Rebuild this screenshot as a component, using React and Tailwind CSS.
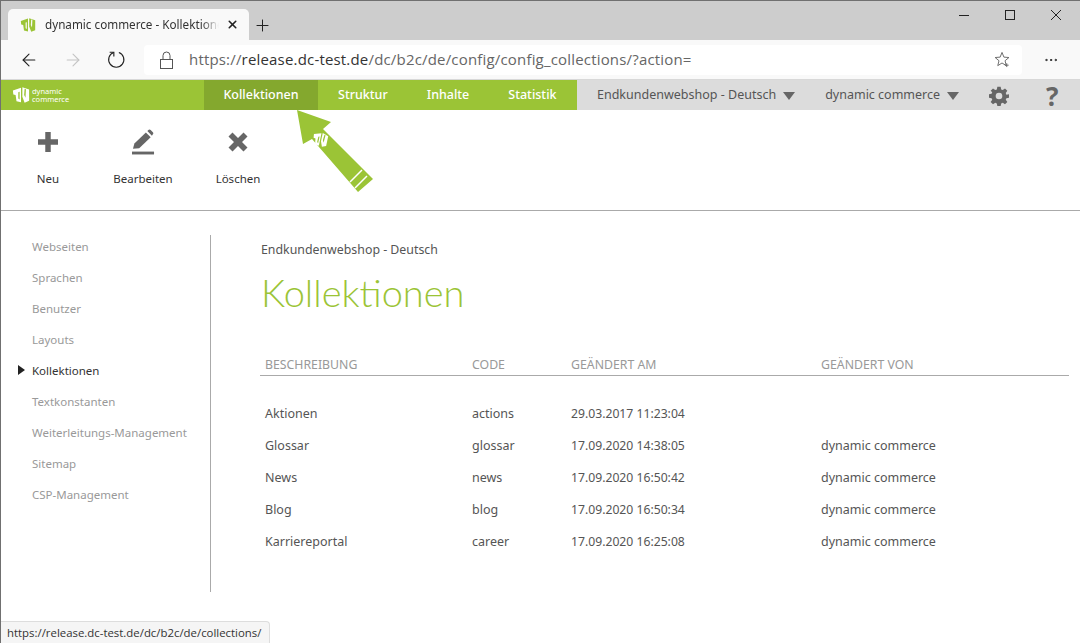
import { X, Plus, ArrowLeft, ArrowRight, MoreHorizontal } from 'lucide-react';

const sideItems = ['Webseiten', 'Sprachen', 'Benutzer', 'Layouts', 'Kollektionen', 'Textkonstanten', 'Weiterleitungs-Management', 'Sitemap', 'CSP-Management'];

const rows = [
  ['Aktionen', 'actions', '29.03.2017 11:23:04', ''],
  ['Glossar', 'glossar', '17.09.2020 14:38:05', 'dynamic commerce'],
  ['News', 'news', '17.09.2020 16:50:42', 'dynamic commerce'],
  ['Blog', 'blog', '17.09.2020 16:50:34', 'dynamic commerce'],
  ['Karriereportal', 'career', '17.09.2020 16:25:08', 'dynamic commerce'],
];

// dc mark, used in the tab, the nav and on the arrow
function LogoShapes({ color, accent }) {
  return (
    <>
      <path d="M1 5 L10 2 L10 18 L5 17 L4 10 L1.500 9.500 Z" fill={color} />
      <path d="M11.500 1.500 L19 4 L19 16.500 L14 18.500 L11.500 12 Z" fill={color} />
      <path d="M7 7 L8.500 6.500 L8.500 15 L7 14 Z M14 3 L15.500 3.500 L15 13 L13.500 10 Z" fill={accent} />
    </>
  );
}

function Logo({ className, color = '#fff', accent = '#9bc436' }) {
  return (
    <svg viewBox="0 0 20 20" className={className}>
      <LogoShapes color={color} accent={accent} />
    </svg>
  );
}

function Caret() {
  return <span className="block w-0 h-0 border-x-[6.5px] border-x-transparent border-t-[8px] border-t-[#666]" />;
}

function ToolButton({ label, icon, className }) {
  return (
    <div className={`flex flex-col items-center ${className}`}>
      <div className="h-[26px] flex items-center justify-center">{icon}</div>
      <div className="mt-[16px] text-[11.5px] leading-4 text-[#333]">{label}</div>
    </div>
  );
}

export default function App() {
  return (
    <div className="relative w-[1080px] h-[643px] overflow-hidden bg-white border-l border-t border-[#707070] font-['Noto_Sans','Open_Sans',sans-serif]">
      {/* browser tabs */}
      <div className="h-[39px] bg-[#cdcdcd] flex items-end pl-[7px]">
        <div className="w-[241px] h-[31px] bg-[#f9f9f9] rounded-t-[5px] flex items-center pl-[12px]">
          <Logo className="w-[16px] h-[16px] mr-[9px]" color="#9bc436" accent="#f9f9f9" />
          <span className="w-[174px] overflow-hidden whitespace-nowrap text-[11.700px] text-[#333] [mask-image:linear-gradient(to_right,#000_90%,transparent)]">dynamic commerce - Kollektionen</span>
          <X size={13} absoluteStrokeWidth strokeWidth={1.6} className="ml-[7px] text-[#222]" />
        </div>
        <Plus size={19} absoluteStrokeWidth strokeWidth={1} className="ml-[4px] mb-[5px] text-[#222]" />
        <div className="ml-auto flex items-center gap-[36px] self-start mt-[9px] pr-[19px]">
          <div className="w-[10px] h-px bg-[#222]" />
          <div className="w-[10px] h-[10px] border border-[#222]" />
          <svg viewBox="0 0 10 10" className="w-[10px] h-[10px] text-[#222]" stroke="currentColor" strokeWidth="1">
            <path d="M0 0 L10 10 M10 0 L0 10" />
          </svg>
        </div>
      </div>

      {/* address bar */}
      <div className="h-[40px] bg-[#f9f9f9] flex items-center border-b border-[#d8d8d8]">
        <ArrowLeft size={20} absoluteStrokeWidth strokeWidth={1.1} className="ml-[18px] text-[#222]" />
        <ArrowRight size={20} absoluteStrokeWidth strokeWidth={1.1} className="ml-[24px] text-[#c4c4c4]" />
        <svg viewBox="0 0 20 20" className="ml-[24px] w-[19px] h-[19px] text-[#222]" fill="none" stroke="currentColor" strokeWidth="1.200">
          <path d="M7 2.600 A8 8 0 1 0 12.500 2.600" />
          <path d="M2.800 2.400 H7.200 V6.800" />
        </svg>
        <div className="ml-[18px] w-[878px] h-[30px] bg-white rounded-[4px] flex items-center pl-[16px] pr-[11px]">
          <svg viewBox="0 0 13 18" className="w-[13px] h-[18px] text-[#555]" fill="none" stroke="currentColor" strokeWidth="1">
            <rect x="0.500" y="8.500" width="12" height="9" />
            <path d="M3 8.500 V4.500 A3.500 3.500 0 0 1 10 4.500 V8.500" />
          </svg>
          <span className="ml-[16px] text-[15px] tracking-[0.18px] text-[#666] font-['Open_Sans',sans-serif]">
            https://<span className="text-[#333]">release.dc-test.de</span>/dc/b2c/de/config/config_collections/?action=
          </span>
          <svg viewBox="0 0 18 18" className="ml-auto w-[17px] h-[17px] text-[#666]" fill="none" stroke="currentColor" strokeWidth="1">
            <path d="M8.500 1.500 L10.500 6.500 L15.800 6.900 L11.700 10.300 L13 15.500 L8.500 12.700 L4 15.500 L5.300 10.300 L1.200 6.900 L6.500 6.500 Z" />
            <path d="M13.500 13 V17 M11.500 15 H15.500" />
          </svg>
        </div>
        <MoreHorizontal size={16} strokeWidth={1.5} className="ml-[21px] text-[#222]" />
      </div>

      {/* app nav */}
      <div className="h-[30px] flex text-[12.5px] font-medium">
        <div className="w-[203px] bg-[#9bc436] flex items-center pl-[11px]">
          <Logo className="w-[18px] h-[18px]" />
          <div className="ml-[2px] text-[7.5px] leading-[8px] font-normal text-white">
            <div>dynamic</div>
            <div>commerce</div>
          </div>
        </div>
        <div className="w-[114px] pt-px bg-[#84a82e] text-white flex items-center justify-center">Kollektionen</div>
        <div className="w-[259px] pt-px bg-[#9bc436] text-white flex items-center">
          <span className="ml-[20px]">Struktur</span>
          <span className="ml-[39px]">Inhalte</span>
          <span className="ml-[39px]">Statistik</span>
        </div>
        <div className="flex-1 pt-px bg-[#dcdcdc] flex items-center font-normal text-[#555]">
          <span className="ml-[20px]">Endkundenwebshop - Deutsch</span>
          <span className="ml-[7px]"><Caret /></span>
          <span className="ml-[30px]">dynamic commerce</span>
          <span className="ml-[7px]"><Caret /></span>
          <svg viewBox="0 0 24 24" className="ml-[30px] w-[20px] h-[20px] text-[#666]" fill="currentColor">
            <path fillRule="evenodd" d="M10 1h4l.6 3.100 1.900.8L19.200 3l2.800 2.800-1.900 2.700.8 1.900L24 10v4l-3.100.6-.8 1.900 1.900 2.700L19.200 22l-2.700-1.900-1.900.8L14 24h-4l-.6-3.100-1.900-.8L4.800 22 2 19.200l1.900-2.700-.8-1.900L0 14v-4l3.100-.6.8-1.900L2 5.800 4.800 3l2.700 1.900 1.900-.8L10 1zm2 7a4 4 0 1 0 0 8 4 4 0 0 0 0-8z" />
          </svg>
          <span className="ml-[37px] text-[26px] leading-none font-bold text-[#666]">?</span>
        </div>
      </div>

      {/* toolbar */}
      <div className="h-[101px] border-b border-[#aaa] flex pt-[19px] pl-[17px]">
        <ToolButton
          label="Neu"
          className="w-[60px]"
          icon={
            <svg viewBox="0 0 22 22" className="w-[20px] h-[20px] text-[#666]" fill="currentColor">
              <path d="M8 0 H14 V8 H22 V14 H14 V22 H8 V14 H0 V8 H8 Z" />
            </svg>
          }
        />
        <ToolButton
          label="Bearbeiten"
          className="w-[70px] ml-[30px]"
          icon={
            <svg viewBox="0 0 24 26" className="w-[23px] h-[26px] text-[#666]" fill="currentColor">
              <path d="M0 23 H23 V26 H0 Z" />
              <path d="M1 20 L2.500 14.500 L14.500 3 L19.500 8 L7.500 19.500 Z" />
              <path d="M16 1.500 L17.500 0.200 Q18.500 -0.300 19.500 0.500 L22 3 Q22.700 4 21.800 5 L20.800 6.400 Z" />
            </svg>
          }
        />
        <ToolButton
          label="Löschen"
          className="w-[60px] ml-[30px]"
          icon={
            <svg viewBox="0 0 20 20" className="w-[20px] h-[20px] text-[#666]" fill="currentColor">
              <path d="M4.500 0.500 L10 6 L15.500 0.500 L19.500 4.500 L14 10 L19.500 15.500 L15.500 19.500 L10 14 L4.500 19.500 L0.500 15.500 L6 10 L0.500 4.500 Z" />
            </svg>
          }
        />
      </div>

      {/* arrow over the nav, viewBox in page pixels */}
      <svg viewBox="290 105 90 90" className="absolute left-[289px] top-[104px] w-[90px] h-[90px]">
        <path d="M297 110 L331 122 L323 129 L373 179 L358 192 L312 139 L303 144 Z" fill="#9bc436" />
        <path d="M350 182 L362 170 M355 188 L367 176" stroke="#fff" strokeWidth="1.500" fill="none" />
        <g transform="translate(314 130) rotate(12) scale(0.8)">
          <LogoShapes color="#fff" accent="#9bc436" />
        </g>
      </svg>

      {/* body */}
      <div className="flex pt-[24px]">
        <div className="w-[210px] h-[357px] border-r border-[#aaa] shrink-0">
          <div className="-mt-[4px]">
            {sideItems.map((item) => (
              <div key={item} className={`relative h-[31px] pl-[31px] flex items-center text-[11.5px] ${item === 'Kollektionen' ? 'text-[#333]' : 'text-[#999]'}`}>
                {item === 'Kollektionen' && (
                  <span className="absolute left-[17px] top-[10px] w-0 h-0 border-y-[5px] border-y-transparent border-l-[7px] border-l-[#222]" />
                )}
                {item}
              </div>
            ))}
          </div>
        </div>

        <div className="ml-[50px] w-[808px]">
          <div className="text-[12.350px] leading-4 mt-[7px] text-[#555]">Endkundenwebshop - Deutsch</div>
          <h1 className="mt-[10px] text-[38px] leading-[48px] font-light font-['Lato',sans-serif] text-[#9bc436]">Kollektionen</h1>
          <div className="mt-[41px] -ml-px h-[19px] flex items-start border-b border-[#aaa] text-[12.300px] leading-4 text-[#999]">
            <span className="w-[212px] pl-[5px]">BESCHREIBUNG</span>
            <span className="w-[99px]">CODE</span>
            <span className="w-[250px]">GEÄNDERT AM</span>
            <span>GEÄNDERT VON</span>
          </div>
          <div className="pt-[22px]">
            {rows.map((row) => (
              <div key={row[0]} className="h-[32px] flex items-center text-[12.500px] text-[#555]">
                <span className="w-[211px] pl-[4px]">{row[0]}</span>
                <span className="w-[99px]">{row[1]}</span>
                <span className="w-[250px] text-[12.200px]">{row[2]}</span>
                <span>{row[3]}</span>
              </div>
            ))}
          </div>
        </div>
      </div>

      {/* status bubble */}
      <div className="absolute left-0 bottom-0 w-[269px] h-[22px] bg-[#f5f5f5] border-t border-r border-[#ddd] rounded-tr-[4px] pl-[6px] flex items-center text-[11.400px] text-[#333] font-['Open_Sans',sans-serif] whitespace-nowrap">
        https://release.dc-test.de/dc/b2c/de/collections/
      </div>
    </div>
  );
}
